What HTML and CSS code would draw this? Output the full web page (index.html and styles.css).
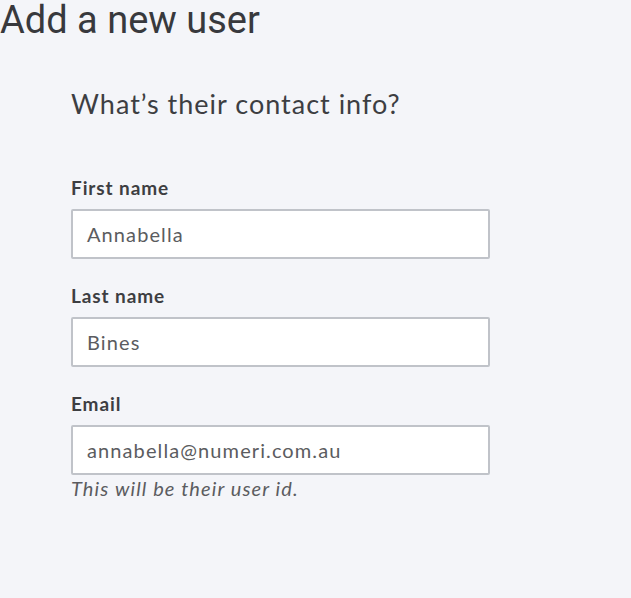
FILE: index.html
```html
<!DOCTYPE html>
<html>
<head>
<meta charset="utf-8">
<link rel="stylesheet" href="styles.css">
</head>
<body>
<div class="page">
  <h1 class="title">Add a new user</h1>
  <section class="form">
    <h2 class="subtitle">What’s their contact info?</h2>
    <div class="field">
      <label class="label">First name</label>
      <div class="input">Annabella</div>
    </div>
    <div class="field">
      <label class="label">Last name</label>
      <div class="input">Bines</div>
    </div>
    <div class="field">
      <label class="label">Email</label>
      <div class="input">annabella@numeri.com.au</div>
      <p class="hint">This will be their user id.</p>
    </div>
  </section>
</div>
</body>
</html>
```

FILE: styles.css
```css
html, body {
  margin: 0;
  padding: 0;
  background: #f4f5f9;
}
.page {
  width: 631px;
  height: 598px;
  overflow: hidden;
}
.title {
  margin: 0;
  font-family: Roboto, "Liberation Sans", sans-serif;
  font-weight: 400;
  font-size: 38px;
  line-height: 40px;
  color: #38393d;
}
.form {
  padding-left: 71px;
  width: 419px;
  display: flex;
  flex-direction: column;
}
.subtitle {
  margin: 48px 0 0 0;
  font-family: Lato, "Noto Sans", sans-serif;
  font-weight: 400;
  font-size: 27px;
  line-height: 32px;
  color: #3d3e42;
  letter-spacing: 1px;
}
.field {
  display: flex;
  flex-direction: column;
  margin-top: 26px;
}
.field:first-of-type {
  margin-top: 57px;
}
.label {
  font-family: Lato, "Noto Sans", sans-serif;
  font-weight: 700;
  font-size: 19px;
  line-height: 22px;
  color: #3d3e42;
  letter-spacing: 0.9px;
  margin-bottom: 10px;
}
.input {
  box-sizing: border-box;
  height: 50px;
  border: 2px solid #c0c3c9;
  border-radius: 2px;
  background: #ffffff;
  padding: 0 14px;
  display: flex;
  align-items: center;
  font-family: Lato, "Noto Sans", sans-serif;
  font-size: 20px;
  color: #5b5c60;
  letter-spacing: 1.1px;
}
.hint {
  margin: 0;
  font-family: Lato, "Noto Sans", sans-serif;
  font-style: italic;
  font-size: 20px;
  line-height: 26px;
  color: #5b5c60;
  letter-spacing: 1.1px;
}
```
